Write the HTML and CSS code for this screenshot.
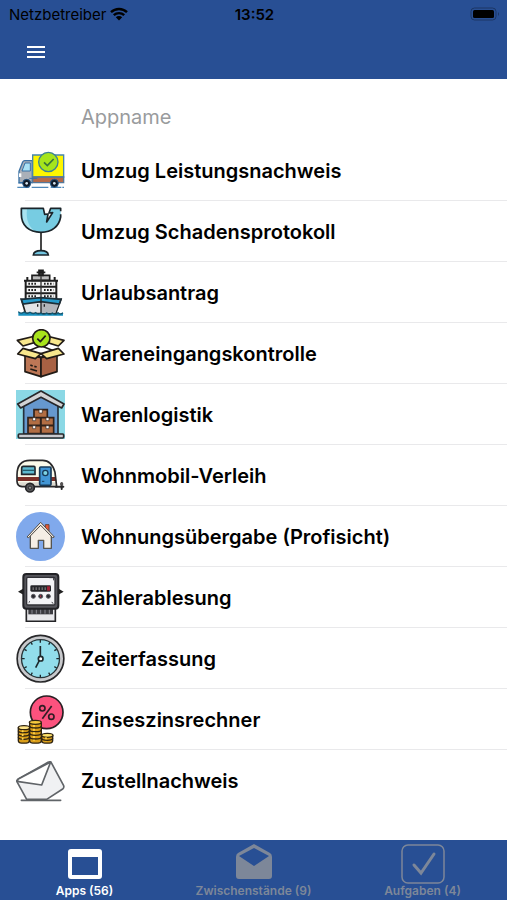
FILE: index.html
```html
<!DOCTYPE html>
<html lang="de">
<head>
    <meta charset="UTF-8">
    <meta name="viewport" content="width=device-width, initial-scale=1.0">
    <title>Apps</title>
    <link rel="stylesheet" href="styles.css">
</head>
<body>
    <header class="header">
        <div class="status">
            <div class="carrier">
                <span>Netzbetreiber</span>
                <svg class="wifi" viewBox="0 0 18 14" aria-hidden="true">
                    <path d="M1 5.200a11.500 11.500 0 0 1 16 0M3.800 8.200a7.500 7.500 0 0 1 10.400 0" fill="none" stroke="#000" stroke-width="2.400"/>
                    <path d="M9 13.500L5.800 10.300a4.600 4.600 0 0 1 6.400 0z"/>
                </svg>
            </div>
            <span class="time">13:52</span>
            <svg class="battery" viewBox="0 0 30 14" aria-hidden="true">
                <rect x="1" y="1" width="25" height="12" rx="3.500" fill="none" stroke="#1c3765"/>
                <rect x="3" y="3" width="21" height="8" rx="1.500"/>
                <path d="M28 5q2 2 0 4z" fill="#1c3765"/>
            </svg>
        </div>
        <button class="menu" type="button" aria-label="Menü">
            <svg viewBox="0 0 18 14" aria-hidden="true">
                <path d="M0 2h18M0 7h18M0 12h18" stroke="#fff" stroke-width="2"/>
            </svg>
        </button>
    </header>

    <main class="main">
        <input class="search" type="text" placeholder="Appname" aria-label="Appname">
        <ul class="list">
            <li class="item"><a class="link" href="#">
                <svg class="icon" viewBox="0 0 147 147" aria-hidden="true">
                    <path d="M4 124h36M47 124h50M104 124h32M139 124h5" stroke="#4d87b8" stroke-width="4"/>
                    <path d="M9 107V76l11-28q2-4 6-4h23v66H9z" fill="#aab0b8" stroke="#3971a5" stroke-width="4"/>
                    <path d="M18 75l9-24h16v24z" fill="#a9e2f6" stroke="#3971a5" stroke-width="3"/>
                    <path d="M9 82h7v11H9z" fill="#fff"/>
                    <path d="M50 27h93v66H50z" fill="#fdf500" stroke="#4785ad" stroke-width="4"/>
                    <path d="M50 93h93v17H50z" fill="#b56a48" stroke="#54789a" stroke-width="4"/>
                    <path d="M40 97h24M7 111h14" stroke="#3971a5" stroke-width="3"/>
                    <circle cx="32" cy="112" r="12" fill="#111b28" stroke="#27598a" stroke-width="3"/>
                    <circle cx="115" cy="112" r="12" fill="#111b28" stroke="#27598a" stroke-width="3"/>
                    <circle cx="32" cy="112" r="4" fill="#d7e3ed"/><circle cx="115" cy="112" r="4" fill="#d7e3ed"/>
                    <circle cx="97" cy="48" r="29" fill="#a5e51c" stroke="#3c8195" stroke-width="4"/>
                    <path d="M84 49l10 10 19-20" fill="none" stroke="#39733b" stroke-width="5"/>
                </svg>
                <span>Umzug Leistungsnachweis</span></a></li>
            <li class="item"><a class="link" href="#">
                <svg class="icon" viewBox="0 0 147 147" aria-hidden="true">
                    <path d="M16 4h66l4 18 10-1-4 24 18-28-11 1 5-14h30v18c0 33-22 54-59 54S16 55 16 22z" fill="#77cce2"/>
                    <path d="M19 6h14c-4 30 5 56 28 69C33 71 19 48 19 22z" fill="#a9e3f0"/>
                    <path d="M134 22v8c-5 28-26 46-59 46-37 0-59-21-59-54V4h66l4 18 10-1-4 24 18-28-11 1 5-14h30v9" fill="none" stroke="#1b252b" stroke-width="5" stroke-linejoin="round"/>
                    <path d="M75 77v54" stroke="#222" stroke-width="5"/>
                    <path d="M52 144c1-9 12-13 23-13s21 4 22 13z" fill="#72c5e0" stroke="#1b252b" stroke-width="5"/>
                </svg>
                <span>Umzug Schadensprotokoll</span></a></li>
            <li class="item"><a class="link" href="#">
                <svg class="icon" viewBox="0 0 147 147" aria-hidden="true">
                    <path d="M29 37h92v62H29z" fill="#f4f4f4"/>
                    <path d="M48 22h53v15H48z" fill="#bbb" stroke="#1e1e1e" stroke-width="5"/>
                    <path d="M69 7h12v15H69zM62 13h26" fill="#333" stroke="#1e1e1e" stroke-width="5"/>
                    <path d="M24 38h102M27 56h97M27 76h97M29 38v59M121 38v59M34 27v11M116 27v11" fill="none" stroke="#1e1e1e" stroke-width="6"/>
                    <path d="M37 47h27M84 47h28M37 66h27M84 66h28M37 85h27M84 85h28" stroke="#222" stroke-width="6" stroke-dasharray="5 4"/>
                    <path d="M75 25v68" stroke="#333" stroke-width="4"/>
                    <path d="M16 94l59 8 60-8-16 43H29z" fill="#e3e5e8" stroke="#222" stroke-width="5"/>
                    <path d="M75 103l58-7-15 39H75z" fill="#b2b5ba"/>
                    <path d="M16 94l59-5 60 5-5 14-55-7-54 7z" fill="#269bcb" stroke="#1c2e38" stroke-width="5"/>
                    <path d="M75 91v45M65 109v7M85 109v7" stroke="#222" stroke-width="4"/>
                    <path d="M7 131q7 8 17 1 10 7 18 1 9 7 17 1 8 7 16 1 8 7 17 0 9 7 17 0 9 7 17-1 7 7 15 0v9H7z" fill="#168ebd"/>
                    <path d="M7 131q7 8 17 1 10 7 18 1 9 7 17 1 8 7 16 1 8 7 17 0 9 7 17 0 9 7 17-1 7 7 15 0" fill="none" stroke="#14536b" stroke-width="4"/>
                </svg>
                <span>Urlaubsantrag</span></a></li>
            <li class="item"><a class="link" href="#">
                <svg class="icon" viewBox="0 0 147 147" aria-hidden="true">
                    <g stroke="#211b16" stroke-width="5" stroke-linejoin="round">
                        <path d="M27 70l48-20 49 20-49 15z" fill="#fff"/>
                        <path d="M4 34l17 17 54-16-17-14z" fill="#f8e78d"/>
                        <path d="M144 34l-17 17-52-16 17-14z" fill="#f8e78d"/>
                        <path d="M27 75l48 11v57l-48-15z" fill="#bd7756"/>
                        <path d="M75 86l48-11v53l-48 15z" fill="#a86143"/>
                        <path d="M21 58L5 75l53 14 17-15z" fill="#f8e78d"/>
                        <path d="M127 58l17 17-52 14-17-15z" fill="#f8e78d"/>
                        <circle cx="76" cy="28" r="26" fill="#a8e31b"/>
                        <path d="M64 29l9 9 16-18" fill="none"/>
                    </g>
                    <path d="M43 108l7 3M55 112l7 2M43 120l20 6" stroke="#211b16" stroke-width="5"/>
                </svg>
                <span>Wareneingangskontrolle</span></a></li>
            <li class="item"><a class="link" href="#">
                <svg class="icon" viewBox="0 0 147 147" aria-hidden="true">
                    <path d="M0 0h147v147H0z" fill="#8bd8e5"/>
                    <path d="M23 47l52-30 51 30v85H23z" fill="#6698ce" stroke="#25303b" stroke-width="5"/>
                    <path d="M5 42L75 3l69 39-7 12-62-32-61 32z" fill="#d2d3d5" stroke="#28282b" stroke-width="5" stroke-linejoin="round"/>
                    <g fill="#b26e44" stroke="#30221b" stroke-width="5">
                        <path d="M54 59h40v24H54zM36 83h38v23H36zM75 83h38v23H75zM36 107h38v24H36zM75 107h38v24H75z"/>
                        <path d="M69 59h10v10H69zM50 83h9v9h-9zM90 83h9v9h-9zM50 107h9v9h-9zM90 107h9v9h-9z" fill="#fff" stroke-width="2"/>
                    </g>
                    <rect x="7" y="132" width="136" height="12" rx="3" fill="#c9cbd0" stroke="#28282b" stroke-width="5"/>
                </svg>
                <span>Warenlogistik</span></a></li>
            <li class="item"><a class="link" href="#">
                <svg class="icon" viewBox="0 0 147 147" aria-hidden="true">
                    <path d="M3 72c0-31 13-44 39-44h38c21 0 31 14 37 36l5 43H18Q4 105 3 91z" fill="#fbfaea"/>
                    <path d="M3 78h116l2 12H4z" fill="#7c3028"/>
                    <path d="M7 94h112v14H18z" fill="#dddad0"/>
                    <path d="M3 72c0-31 13-44 39-44h38c21 0 31 14 37 36l5 43H18Q4 105 3 91z" fill="none" stroke="#29282a" stroke-width="5"/>
                    <path d="M22 46h32q3 0 3 4v20H17V52q0-6 5-6z" fill="#5ebad0" stroke="#20282e" stroke-width="5"/>
                    <path d="M20 58h35" stroke="#245d6d" stroke-width="4"/>
                    <rect x="71" y="48" width="34" height="55" rx="3" fill="#4296d5" stroke="#173a58" stroke-width="5"/>
                    <circle cx="88" cy="66" r="8" fill="#7ed3e2" stroke="#173a58" stroke-width="4"/>
                    <path d="M78 91h7" stroke="#173a58" stroke-width="3"/>
                    <path d="M119 107h23M137 97v17" stroke="#29282a" stroke-width="6" stroke-linecap="round"/>
                    <circle cx="137" cy="99" r="5" fill="#565353"/>
                    <circle cx="42" cy="110" r="13" fill="#575759" stroke="#252527" stroke-width="5"/>
                    <circle cx="42" cy="110" r="5" fill="#8c8c8c" stroke="#29292a" stroke-width="3"/>
                </svg>
                <span>Wohnmobil-Verleih</span></a></li>
            <li class="item"><a class="link" href="#">
                <svg class="icon" viewBox="0 0 147 147" aria-hidden="true">
                    <circle cx="73.500" cy="73.500" r="73.500" fill="#80a9ec"/>
                    <path d="M88 38h11v22l-11-9z" fill="#e95736" stroke="#6b4639" stroke-width="3"/>
                    <path d="M43 109V69l31-33 32 34v39H83V85H67v24z" fill="#f5eee5" stroke="#555450" stroke-width="4" stroke-linejoin="round"/>
                    <path d="M33 75l41-44 41 44-5 2-36-37-36 37z" fill="#f5eee5" stroke="#4e4a46" stroke-width="3" stroke-linejoin="round"/>
                </svg>
                <span>Wohnungsübergabe (Profisicht)</span></a></li>
            <li class="item"><a class="link" href="#">
                <svg class="icon" viewBox="0 0 147 147" aria-hidden="true">
                    <path d="M31 102h87v43H31z" fill="#e9e9ec" stroke="#242427" stroke-width="5"/>
                    <path d="M37 107h74v17H37z" fill="#3b3b40"/>
                    <path d="M48 106v16M61 106v16M74 106v16M87 106v16M100 106v16" stroke="#888890" stroke-width="3"/>
                    <path d="M22 49l-12 7 12 7M127 49l12 7-12 7" fill="#222" stroke="#222" stroke-width="4"/>
                    <rect x="22" y="3" width="105" height="104" rx="9" fill="#55555b" stroke="#222226" stroke-width="6"/>
                    <rect x="32" y="13" width="85" height="83" rx="4" fill="#f3f3f6" stroke="#303036" stroke-width="4"/>
                    <rect x="43" y="37" width="62" height="19" rx="4" fill="#252529"/>
                    <path d="M50 47h42" stroke="#8c898c" stroke-width="8" stroke-dasharray="3 6"/>
                    <path d="M93 40h9v13h-9z" fill="#9f1f34"/>
                    <g fill="#29292f" stroke="#5c5b62" stroke-width="3"><circle cx="52" cy="70" r="6"/><circle cx="74" cy="70" r="6"/><circle cx="97" cy="70" r="6"/></g>
                    <path d="M74 67v6" stroke="#c23249" stroke-width="3"/>
                    <path d="M38 89l4-4M107 88l5 3M100 14h13v8" fill="none" stroke="#303036" stroke-width="3"/>
                </svg>
                <span>Zählerablesung</span></a></li>
            <li class="item"><a class="link" href="#">
                <svg class="icon" viewBox="0 0 147 147" aria-hidden="true">
                    <circle cx="73.500" cy="74" r="70" fill="#c8c9cc" stroke="#28282a" stroke-width="5"/>
                    <circle cx="73.500" cy="74" r="57" fill="#92ddeb" stroke="#28363a" stroke-width="4"/>
                    <g stroke="#1e292d" stroke-width="4"><path d="M73 18v8M73 122v8M18 74h8M121 74h8M45 25l4 7M98 116l4 7M25 46l7 4M115 98l7 4M25 102l7-4M115 50l7-4M45 123l4-7M98 32l4-7"/><path d="M73 36v38L59 101" fill="none" stroke-width="5"/></g>
                    <circle cx="74" cy="74" r="7" fill="#fff" stroke="#1e292d" stroke-width="5"/>
                </svg>
                <span>Zeiterfassung</span></a></li>
            <li class="item"><a class="link" href="#">
                <svg class="icon" viewBox="0 0 147 147" aria-hidden="true">
                    <circle cx="92" cy="52" r="49" fill="#fc527e" stroke="#281f23" stroke-width="5"/>
                    <path d="M79 71l28-38" stroke="#321d24" stroke-width="5"/><circle cx="79" cy="40" r="8" fill="none" stroke="#321d24" stroke-width="5"/><circle cx="106" cy="65" r="8" fill="none" stroke="#321d24" stroke-width="5"/>
                    <g fill="#d99d18" stroke="#302410" stroke-width="4">
                        <path d="M7 97v40c0 10 33 10 33 0V97M41 83v54c0 10 35 10 35 0V83M77 121v16c0 10 33 10 33 0v-16"/>
                        <path d="M7 107c0 8 33 8 33 0M7 117c0 8 33 8 33 0M7 127c0 8 33 8 33 0M41 93c0 8 35 8 35 0M41 104c0 8 35 8 35 0M41 115c0 8 35 8 35 0M41 126c0 8 35 8 35 0M77 130c0 8 33 8 33 0" fill="none"/>
                        <ellipse cx="24" cy="98" rx="17" ry="6" fill="#ffe58a"/>
                        <ellipse cx="58" cy="82" rx="18" ry="6" fill="#f6c93d"/>
                        <ellipse cx="94" cy="121" rx="17" ry="6" fill="#ffe268"/>
                    </g>
                    <path d="M20 106v30M54 90v47M90 127v12" stroke="#ffd44c" stroke-width="5" stroke-dasharray="6 5"/>
                </svg>
                <span>Zinseszinsrechner</span></a></li>
            <li class="item"><a class="link" href="#">
                <svg class="icon" viewBox="0 0 147 147" aria-hidden="true">
                    <g fill="#f0f1f3" stroke="#606468" stroke-width="5" stroke-linejoin="round" stroke-linecap="round">
                        <path d="M32 130L4 79q-4-6 3-10l89-50q7-4 11 3l36 67q2 6-3 10l-48 31z"/>
                        <path d="M3 76l74 11 27-69L7 69z" fill="#fff"/>
                        <path d="M16 133h118" fill="none"/>
                    </g>
                </svg>
                <span>Zustellnachweis</span></a></li>
        </ul>
    </main>

    <nav class="tabs">
        <a class="tab active" href="#">
            <svg class="tab-icon" viewBox="0 0 44 40" aria-hidden="true">
                <path fill-rule="evenodd" d="M8 5h28q3 0 3 3v24q0 3-3 3H8q-3 0-3-3V8q0-3 3-3zm1 8v18h26V13z" fill="currentColor"/>
            </svg>
            <span>Apps (56)</span>
        </a>
        <a class="tab" href="#">
            <svg class="tab-icon" viewBox="0 0 44 40" aria-hidden="true">
                <path fill-rule="evenodd" d="M22 0l16 9q2 1 2 4v19q0 3-3 3H7q-3 0-3-3V13q0-3 2-4zm0 4L7 12l15 10 15-10z" fill="currentColor"/>
            </svg>
            <span>Zwischenstände (9)</span>
        </a>
        <a class="tab" href="#">
            <svg class="tab-icon" viewBox="0 0 44 40" aria-hidden="true">
                <rect x="1" y="1" width="42" height="38" rx="6" fill="none" stroke="currentColor" stroke-width="1.500"/>
                <path d="M13 21l7 8L33 10" fill="none" stroke="currentColor" stroke-width="3" stroke-linecap="round"/>
            </svg>
            <span>Aufgaben (4)</span>
        </a>
    </nav>
</body>
</html>
```
FILE: styles.css
```css
*{
    margin: 0;
    padding: 0;
    box-sizing: border-box;
}
body{
    display: flex;
    flex-direction: column;
    min-height: 100vh;
    font-family: Inter, "Liberation Sans", sans-serif;
    color: #000;
    background: #fff;
}
a{
    color: inherit;
    text-decoration: none;
}
.header{
    height: 79px;
    background: #284f94;
}
.status{
    display: grid;
    grid-template-columns: 1fr auto 1fr;
    align-items: center;
    height: 28px;
    padding: 0 7px 0 9px;
    font-size: 15px;
}
.carrier{
    display: flex;
    align-items: center;
    gap: 4px;
}
.wifi{
    width: 18px;
    height: 14px;
}
.time{
    font-weight: 600;
}
.battery{
    justify-self: end;
    width: 30px;
    height: 14px;
}
.menu{
    display: flex;
    align-items: center;
    justify-content: center;
    width: 48px;
    height: 48px;
    margin-left: 12px;
    border: 0;
    background: none;
}
.menu svg{
    width: 18px;
    height: 14px;
}
.main{
    flex: 1;
}
.search{
    display: block;
    width: 100%;
    height: 61px;
    padding: 14px 16px 0 81px;
    border: 0;
    outline: 0;
    font: 400 20px Inter, "Liberation Sans", sans-serif;
    background: none;
}
.search::placeholder{
    color: #999b9d;
    opacity: 1;
}
.list{
    list-style: none;
}
.link{
    display: flex;
    align-items: center;
    gap: 16px;
    height: 61px;
    padding: 0 16px;
    font-size: 20px;
    font-weight: 600;
    background: linear-gradient(#e9e9eb, #e9e9eb) 25px 100% / 100% 1px no-repeat;
}
.item:last-child .link{
    background: none;
}
.icon{
    flex: none;
    width: 49px;
    height: 49px;
}
.tabs{
    display: grid;
    grid-template-columns: repeat(3, 1fr);
    height: 60px;
    background: #284f94;
}
.tab{
    display: flex;
    flex-direction: column;
    align-items: center;
    padding-top: 4px;
    font-size: 12px;
    font-weight: 600;
    line-height: 14px;
    color: #7d8799;
}
.tab.active{
    color: #fff;
}
.tab-icon{
    width: 44px;
    height: 40px;
}
```
